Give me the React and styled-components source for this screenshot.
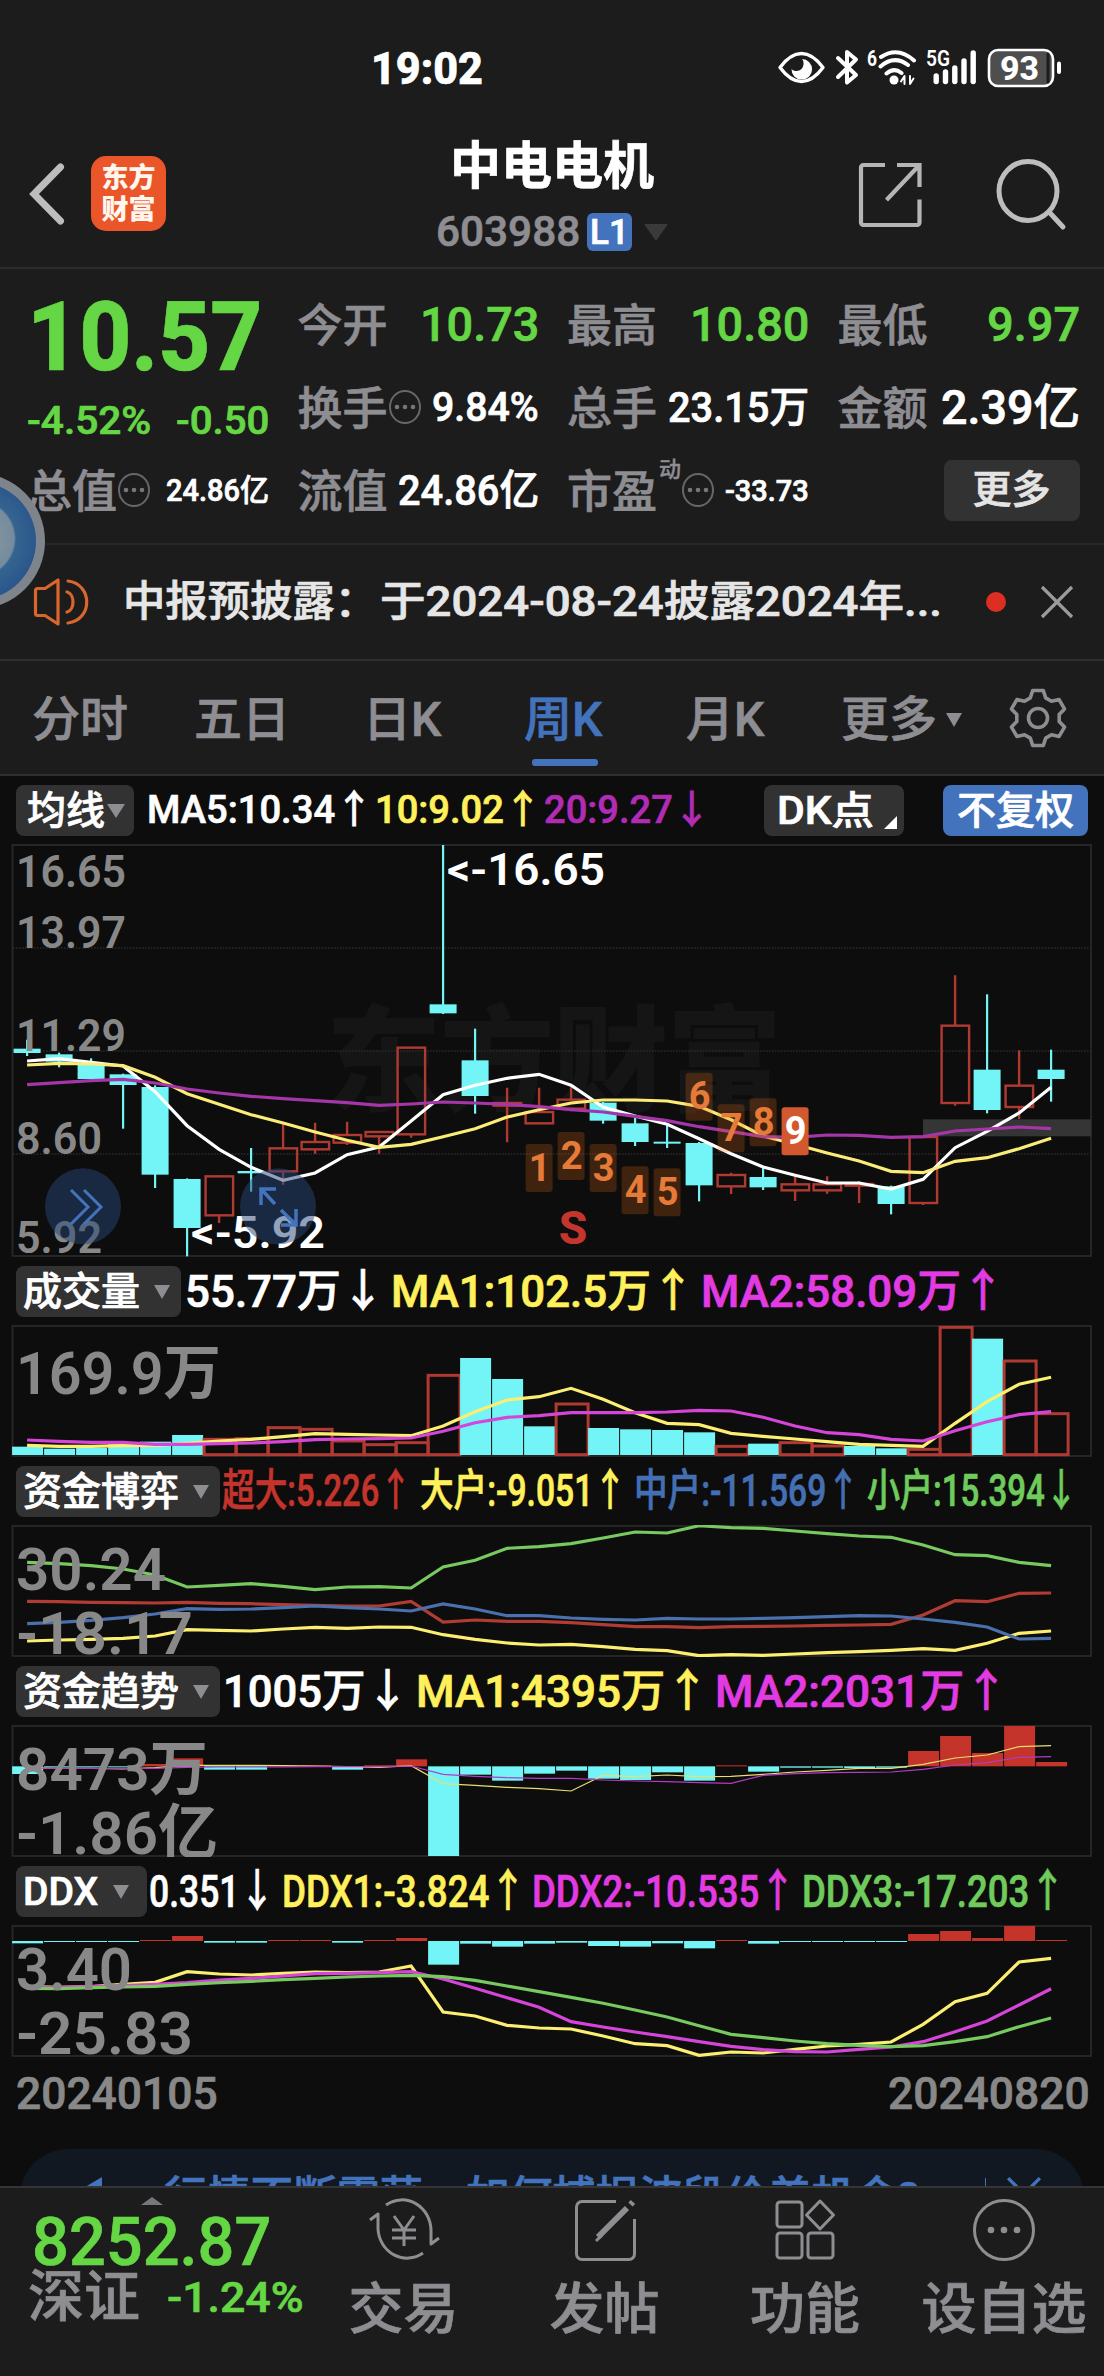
import React, { useLayoutEffect, useRef, useState } from 'react'
import styled, { createGlobalStyle } from 'styled-components';

const CYAN = '#73f5f7';
const RED = '#c4342b';
const OUTLINE = '#b03a32';
const YELLOW = '#fff05c';
const MAGENTA = '#e23be2';
const BLUE = '#4373bc';
const GREEN = '#65d644';
const LIME = '#6fcb5c';
const GREY = '#8e8d92';

const GlobalStyle = createGlobalStyle`
    body {
        margin: 0;
        background: #1c1c1c;
        font-family: Roboto, "Noto Sans CJK SC", sans-serif;
        font-weight: 500;
        line-height: 1;
        color: #ffffff;
        -webkit-text-stroke: 0.7px currentColor;
    }
    * { box-sizing: border-box; }
    svg { display: block; flex: none; -webkit-text-stroke: 0; }
    svg text { font-family: Roboto, "Noto Sans CJK SC", sans-serif; }
`;

const Page = styled.div`
    position: relative;
    width: 1104px;
    height: 2376px;
    overflow: hidden;
    background: #1c1c1c;
`;

/* ---------- text that is squeezed to the width of its cell ---------- */
const FitBox = styled.span`
    display: inline-block;
    flex: none;
    width: ${p => p.$w}px;
    margin-left: ${p => p.$ml || 0}px;
    white-space: nowrap;
    font-size: ${p => p.$size}px;
    font-weight: ${p => p.$weight || 500};
    color: ${p => p.$color || 'inherit'};
`;
const FitInner = styled.span`
    display: inline-block;
    transform-origin: left center;
`;

function Fit({ w, ml, size, weight, color, children }) {
    const ref = useRef(null);
    const [scale, setScale] = useState(1);
    useLayoutEffect(() => {
        setScale(w / ref.current.offsetWidth);
    }, [w, children]);
    return (
        <FitBox $w={w} $ml={ml} $size={size} $weight={weight} $color={color}>
            <FitInner ref={ref} style={{ transform: `scaleX(${scale})` }}>{children}</FitInner>
        </FitBox>
    );
}

/* ---------- status bar ---------- */
const StatusBar = styled.div`
    display: flex;
    align-items: center;
    justify-content: space-between;
    height: 120px;
    padding: 16px 41px 0 371px;
`;

const StatusIcons = () => (
    <svg width="286" height="40" viewBox="0 0 286 40" fill="none" stroke="#fff" strokeLinecap="round" strokeLinejoin="round">
        <path d="M3 19.5C10 10 16 5.5 24.5 5.5S39 10 46 19.5C39 29 33 33.500 24.500 33.500S10 29 3 19.500Z" strokeWidth="3.400" />
        <path d="M25 11a10.300 10.300 0 1 1-10.500 10c3 3.200 8.500 2.500 10.800-1 2-3 1.500-7-.3-9Z" fill="#fff" stroke="none" />
        <path d="M61 10L79 27L70 34.500V4L79 11.500L61 29" strokeWidth="4" />
        <text x="90" y="18" fontSize="22" fontWeight="700" fill="#fff" stroke="none" textLength="10" lengthAdjust="spacingAndGlyphs">6</text>
        <path d="M104 9Q121-2 137 12.500M103.500 18.500Q117 6.500 131 17M109.500 25.500Q117 19 124.500 25" strokeWidth="4" />
        <circle cx="117" cy="32" r="4.500" fill="#fff" stroke="none" />
        <path d="M127.500 36V28L124 33.500M133 28V36L136.500 30.500" strokeWidth="2" />
        <text x="149" y="18" fontSize="22" fontWeight="600" fill="#fff" stroke="none" textLength="24" lengthAdjust="spacingAndGlyphs">5G</text>
        <path d="M159.200 28V33.500M168.500 24V33.500M177.800 20V33.500M187 13V33.500M196.200 5V33.500" strokeWidth="5.400" />
        <rect x="212" y="2" width="64" height="36" rx="9" fill="#4e4e4e" strokeWidth="2.600" />
        <path d="M271 6V34" stroke="#1c1c1c" strokeWidth="3" />
        <text x="223" y="31.500" fontSize="33" fontWeight="800" fill="#fff" stroke="none" textLength="39" lengthAdjust="spacingAndGlyphs">93</text>
        <path d="M282 15.500V24" strokeWidth="4" />
    </svg>
);

/* ---------- header ---------- */
const Header = styled.div`
    display: grid;
    grid-template-columns: 300px 1fr 300px;
    align-items: center;
    height: 149px;
    border-bottom: 2px solid #2c2b2b;
`;
const HeaderLeft = styled.div`
    display: flex;
    align-items: center;
    gap: 25px;
    padding-left: 28px;
`;
const HeaderRight = styled.div`
    display: flex;
    align-items: center;
    gap: 72px;
    padding-left: 53px;
`;
const Logo = styled.div`
    display: grid;
    align-content: center;
    justify-content: center;
    gap: 5px;
    width: 75px;
    height: 75px;
    padding-top: 2px;
    border-radius: 15px;
    background: #ea5529;
    color: #fff6ee;
    font-size: 27px;
    font-weight: 800;
    -webkit-text-stroke: 0;
`;
const Title = styled.div`
    display: flex;
    flex-direction: column;
    align-items: center;
    gap: 19px;
    padding-top: 7px;
    font-size: 51px;
    font-weight: 700;
`;
const Code = styled.div`
    display: flex;
    align-items: center;
    font-size: 42px;
    font-weight: 500;
    color: ${GREY};
`;
const Level = styled.span`
    display: flex;
    align-items: center;
    justify-content: center;
    width: 45px;
    height: 38px;
    margin: 0 12px 0 7px;
    border-radius: 6px;
    background: ${BLUE};
    color: #fff;
    font-size: 35px;
`;
const Caret = styled.span`
    flex: none;
    width: 0;
    height: 0;
    margin-left: ${p => p.$ml || 0}px;
    border-left: ${p => p.$w / 2}px solid transparent;
    border-right: ${p => p.$w / 2}px solid transparent;
    border-top: ${p => p.$h}px solid ${p => p.$color || GREY};
`;

const BackIcon = () => (
    <svg width="38" height="64" viewBox="0 0 38 64" fill="none" stroke="#bdbdbd" strokeWidth="7" strokeLinecap="round">
        <path d="M32.500 5L6 32L32.500 59" strokeLinejoin="miter" />
    </svg>
);
const ShareIcon = () => (
    <svg width="66" height="66" viewBox="0 0 66 66" fill="none" stroke="#b5b5b5" strokeWidth="4.200">
        <path d="M28 4H6.500A2.500 2.500 0 0 0 4 6.500V61.500A2.500 2.500 0 0 0 6.500 64H60A2.500 2.500 0 0 0 62.500 61.500V38.500M40 4H62.500V26M62 4.500L29.500 39" />
    </svg>
);
const SearchIcon = () => (
    <svg width="72" height="76" viewBox="0 0 72 76" fill="none" stroke="#bdbdbd" strokeWidth="5" strokeLinecap="round">
        <ellipse cx="33" cy="35" rx="29" ry="29.500" />
        <path d="M55 57L68 71" />
    </svg>
);

/* ---------- quote panel ---------- */
const Quote = styled.div`
    display: grid;
    grid-template-columns: 242px 241px 242px 242px;
    grid-template-rows: 82px 83px 83px;
    column-gap: 28.500px;
    height: 276px;
    padding: 15px 0 0 27px;
    border-bottom: 2px solid #272727;
`;
const PriceBlock = styled.div`
    grid-row: 1 / 3;
    display: flex;
    flex-direction: column;
    gap: 16px;
    padding-top: 5px;
    color: ${GREEN};
`;
const Change = styled.div`
    display: flex;
    justify-content: space-between;
`;
const Cell = styled.div`
    display: flex;
    align-items: center;
    min-width: 0;
    white-space: nowrap;
`;
const Label = styled.span`
    width: 90px;
    padding-top: 3px;
    font-size: 45px;
    color: ${GREY};
`;
const Sup = styled.span`
    align-self: flex-start;
    padding-top: 10px;
    margin: 0 0 0 2px;
    font-size: 22px;
    color: ${GREY};
    -webkit-text-stroke-width: 0.4px;
`;
const Value = styled.span`
    margin-left: auto;
    color: ${p => p.$up ? '#fff' : GREEN};
`;
const MoreButton = styled.button`
    width: 136px;
    height: 61px;
    margin: 0 0 0 auto;
    padding: 0;
    border: 0;
    border-radius: 8px;
    background: #323232;
    color: #e4e4e4;
    font: 500 39px/1 Roboto, "Noto Sans CJK SC", sans-serif;
    -webkit-text-stroke: 0.7px currentColor;
`;
const InfoIcon = () => (
    <svg width="34" height="36" viewBox="0 0 34 36">
        <ellipse cx="17" cy="17" rx="15" ry="16" fill="none" stroke="#67666a" strokeWidth="2" />
        <g fill="#77767a"><circle cx="9" cy="17" r="2.300" /><circle cx="17" cy="17" r="2.300" /><circle cx="25" cy="17" r="2.300" /></g>
    </svg>
);

function Item({ label, sup, info, w, size, value, green }) {
    return (
        <Cell>
            <Label>{label}</Label>
            {sup && <Sup>{sup}</Sup>}
            {info && <InfoIcon />}
            <Value $up={!green}><Fit w={w} size={size}>{value}</Fit></Value>
        </Cell>
    );
}

/* ---------- notice and tabs ---------- */
const Notice = styled.div`
    display: flex;
    align-items: center;
    height: 116px;
    padding-left: 32px;
    border-bottom: 2px solid #303030;
    color: #e6e6e6;
`;
const Dot = styled.span`
    width: 20px;
    height: 20px;
    margin: 0 34px 0 44px;
    border-radius: 50%;
    background: #dc2f22;
`;
const Tabs = styled.div`
    display: flex;
    align-items: center;
    height: 115px;
    padding-left: 32px;
    border-bottom: 2px solid #2f2f2f;
`;
const Tab = styled.div`
    position: relative;
    display: flex;
    align-items: center;
    height: 113px;
    width: ${p => p.$w}px;
    margin-right: ${p => p.$mr}px;
    padding-top: 4px;
    font-size: 48px;
    white-space: nowrap;
    color: ${p => p.$on ? BLUE : GREY};
    &::after {
        content: '';
        display: ${p => p.$on ? 'block' : 'none'};
        position: absolute;
        left: 8px;
        bottom: 8px;
        width: 66px;
        height: 7px;
        border-radius: 3px;
        background: ${BLUE};
    }
`;

const SpeakerIcon = () => (
    <svg width="58" height="50" viewBox="0 0 58 50" fill="none" stroke="#d9662c" strokeWidth="3.200" strokeLinecap="round" strokeLinejoin="round">
        <path d="M3.500 13.500Q3.500 11.500 5.500 11.500H13L26 3V47L13 38.500H5.500Q3.500 38.500 3.500 36.500Z" />
        <path d="M35 15C43 17 43 33 35 35M36 4C61 7 61 43 36 46" />
    </svg>
);
const CloseIcon = ({ size = 34, color = '#9b9b9b' }) => (
    <svg width={size} height={size} viewBox="0 0 34 34" stroke={color} strokeWidth="3.200">
        <path d="M2 2L32 32M32 2L2 32" />
    </svg>
);
const gearPath = () => {
    const pts = [];
    for (let k = 0; k < 6; k++) {
        [[-21, 21.500], [-11, 28], [11, 28], [21, 21.500]].forEach(([a, r]) => {
            const t = (k * 60 - 90 + a) * Math.PI / 180;
            pts.push(`${(30 + r * Math.cos(t)).toFixed(1)} ${(30 + r * Math.sin(t)).toFixed(1)}`);
        });
    }
    return `M${pts.join('L')}Z`;
};
const GearIcon = () => (
    <svg width="60" height="60" viewBox="0 0 60 60" fill="none" stroke={GREY} strokeWidth="3.600" strokeLinejoin="round">
        <path d={gearPath()} />
        <circle cx="30" cy="30" r="9.500" />
    </svg>
);

/* ---------- charts ---------- */
const ChartArea = styled.div`
    height: 1410px;
    overflow: hidden;
    background: #0d0d0d;
`;
const Legend = styled.div`
    display: flex;
    align-items: center;
    height: 68px;
    padding-left: 16px;
`;
const Chip = styled.span`
    display: flex;
    flex: none;
    align-items: center;
    width: ${p => p.$w}px;
    height: 51px;
    margin-left: ${p => p.$ml || 0}px;
    padding: 2px 0 0 ${p => p.$pl || 7}px;
    border-radius: 8px;
    background: ${p => p.$bg || '#323232'};
    color: #fff;
    font-size: 39px;
    white-space: nowrap;
`;
const Corner = styled.span`
    align-self: flex-end;
    margin: 0 0 7px 10px;
    border-left: 13px solid transparent;
    border-bottom: 13px solid #fff;
`;

const X0 = 27.100;
const STEP = 32;
const cx = i => X0 + STEP * i;

// every data row is kept in thirds of a pixel, measured from `top`
const scaleY = top => v => (v - top) / 3 + 1;

const Line = ({ data, y, color, width = 3.200 }) => (
    <polyline fill="none" stroke={color} strokeWidth={width} points={data.map((v, i) => `${cx(i).toFixed(1)},${y(v).toFixed(1)}`).join(' ')} />
);
const Frame = ({ h }) => <rect x="12.500" y="1" width="1078.500" height={h - 2} fill="none" stroke="#292929" strokeWidth="1.800" />;
const AxisText = ({ x = 16, y, w, size = 60, children }) => (
    <text x={x} y={y} fontSize={size} fontWeight="600" fill="#888" textLength={w} lengthAdjust="spacingAndGlyphs">{children}</text>
);

// high, body top, body bottom, low, rising
const candles = [
    [628, 655, 668, 677, 0], [667, 672, 694, 711, 0], [684, 700, 746, 748, 0], [730, 732, 764, 895, 0],
    [765, 770, 1033, 1073, 0], [1044, 1046, 1193, 1278, 0], [1036, 1038, 1155, 1178, 1], [953, 1022, 1029, 1084, 0],
    [880, 954, 1023, 1063, 1], [877, 935, 957, 970, 1], [874, 914, 937, 944, 1], [903, 905, 918, 970, 1],
    [652, 652, 912, 922, 1], [44, 522, 549, 551, 0], [595, 690, 797, 850, 0], [772, 818, 826, 936, 1],
    [772, 845, 879, 881, 1], [765, 808, 835, 843, 1], [815, 817, 871, 880, 0], [862, 879, 935, 947, 0],
    [885, 934, 940, 953, 0], [935, 938, 1065, 1113, 0], [1027, 1034, 1068, 1091, 1], [1012, 1040, 1071, 1079, 0],
    [1036, 1062, 1080, 1112, 1], [1038, 1062, 1080, 1090, 1], [1052, 1061, 1066, 1118, 1], [1066, 1068, 1121, 1152, 0],
    [918, 920, 1118, 1124, 1], [435, 586, 818, 826, 1], [492, 718, 839, 849, 0], [660, 766, 830, 866, 1],
    [658, 718, 746, 814, 0],
];
const ma5 = [692, 685, 696, 707, 784, 886, 957, 1011, 1050, 1028, 973, 950, 872, 793, 765, 744, 732, 765, 830, 857, 882, 925, 970, 1010, 1035, 1058, 1058, 1076, 1047, 952, 903, 848, 771];
const ma10 = [704, 699, 701, 706, 741, 790, 822, 853, 878, 905, 930, 951, 942, 919, 895, 860, 838, 818, 809, 809, 812, 828, 868, 917, 942, 968, 992, 1023, 1027, 993, 982, 955, 924];
const ma20 = [763, 757, 751, 747, 758, 776, 788, 798, 805, 811, 817, 825, 821, 815, 818, 822, 829, 838, 845, 858, 871, 889, 904, 919, 921, 914, 915, 921, 919, 902, 896, 890, 895];
// candle index, top, digit
const marks = [[16, 941, 1], [17, 905, 2], [18, 941, 3], [19, 1008, 4], [20, 1014, 5], [21, 727, 6], [22, 822, 7], [23, 804, 8], [24, 831, 9]];

function Candle({ c, i, y }) {
    const [hi, top, bottom, lo, rising] = c;
    const x = cx(i);
    if (!rising) {
        return (
            <g fill={CYAN}>
                <rect x={x - 1.100} y={y(hi)} width="2.200" height={(lo - hi) / 3} />
                <rect x={x - 13.500} y={y(top)} width="27" height={Math.max(2, (bottom - top) / 3)} />
            </g>
        );
    }
    return (
        <g fill="none" stroke={OUTLINE} strokeWidth="2.400">
            <path d={`M${x} ${y(hi)}V${y(top)}M${x} ${y(bottom)}V${y(lo)}`} />
            <rect x={x - 13.500} y={y(top)} width="27.500" height={(bottom - top) / 3} />
        </g>
    );
}

function KChart() {
    const y = scaleY(44);
    return (
        <svg width="1104" height="413" viewBox="0 0 1104 413">
            <text x="326" y="258" fontSize="115" fontWeight="900" fill="#151515" textLength="456">东方财富</text>
            <Frame h={413} />
            {[353, 662, 971].map(v => <path key={v} d={`M13 ${y(v)}H1091`} stroke="#2b2b2b" strokeWidth="1.500" strokeDasharray="1.500 1.500" />)}
            <rect x="923" y={y(867)} width="168" height="17" fill="#353535" />
            {candles.map((c, i) => <Candle key={i} c={c} i={i} y={y} />)}
            <Line data={ma5} y={y} color="#ffffff" />
            <Line data={ma10} y={y} color="#fbec78" />
            <Line data={ma20} y={y} color="#a536a8" />
            <AxisText y={y(171)} w={110} size={45}>16.65</AxisText>
            <AxisText y={y(354)} w={110} size={45}>13.97</AxisText>
            <AxisText y={y(662)} w={110} size={45}>11.29</AxisText>
            <AxisText y={y(972)} w={86} size={45}>8.60</AxisText>
            <AxisText y={y(1269)} w={86} size={45}>5.92</AxisText>
            <g fill="#fff" fontSize="45" fontWeight="600">
                <text x="447" y={y(165)} textLength="158" lengthAdjust="spacingAndGlyphs">&lt;-16.65</text>
                <text x="191" y={y(1254)} textLength="134" lengthAdjust="spacingAndGlyphs">&lt;-5.92</text>
            </g>
            {marks.map(([i, top, n]) => (
                <g key={n}>
                    <rect x={cx(i) - 13.500} y={y(top)} width="27" height="48" rx="3" fill={n === 9 ? '#d2592f' : '#e66a14'} fillOpacity={n === 9 ? 1 : 0.230} />
                    <text x={cx(i) + 0.500} y={y(top) + 36.500} fontSize="38" fontWeight="700" textAnchor="middle" fill={n === 9 ? '#fff' : '#e67a38'}>{n}</text>
                </g>
            ))}
            <text x="573" y={y(1242)} fontSize="46" fontWeight="800" fill="#c4352d" textAnchor="middle">S</text>
            <g fill="#284678" fillOpacity="0.500">
                <circle cx="83" cy={y(1128)} r="38" />
                <circle cx="278" cy={y(1128)} r="38" />
            </g>
            <g fill="none" stroke={BLUE} strokeWidth="3">
                <path d="M71 346L88 363L71 380M84 346L101 363L84 380" />
                <path d="M261 361V345H276M261 345L275 360M296 365V381H281M296 381L281 366" strokeWidth="3.500" />
            </g>
        </svg>
    );
}

const volume = [-560, -566, -563, -553, -545, -525, 535, 533, 500, 505, 540, 551, 545, 343, -294, -357, -499, 429, -504, -508, -510, -517, 556, -551, 545, 555, -558, -565, 565, 199, -236, 300, 458];
const volMa1 = [556, 559, 559, 557, 556, 550, 543, 538, 530, 521, 523, 525, 527, 498, 455, 420, 410, 385, 418, 458, 490, 494, 520, 529, 537, 545, 553, 556, 559, 490, 425, 373, 352];
const volMa2 = [540, 544, 547, 547, 553, 553, 551, 549, 545, 539, 537, 536, 534, 514, 488, 472, 467, 458, 458, 458, 456, 451, 453, 472, 498, 518, 524, 538, 543, 512, 485, 464, 455];

function VolumeChart() {
    const y = scaleY(198);
    return (
        <svg width="1104" height="132" viewBox="0 0 1104 132">
            <Frame h={132} />
            {volume.map((v, i) => v < 0
                ? <rect key={i} x={cx(i) - 15} y={y(-v)} width="31" height={(585 + v) / 3} fill={CYAN} />
                : <rect key={i} x={cx(i) - 15} y={y(v + 3)} width="32" height={(581 - v) / 3} fill="none" stroke={OUTLINE} strokeWidth="3" />)}
            <Line data={volMa1} y={y} color="#fbee70" />
            <Line data={volMa2} y={y} color="#d545d8" />
            <AxisText y={y(403)} w={205}>169.9万</AxisText>
        </svg>
    );
}

const small = [907, 911, 917, 927, 945, 981, 976, 971, 979, 989, 981, 980, 984, 921, 901, 865, 860, 851, 834, 816, 819, 797, 803, 805, 813, 821, 828, 832, 855, 884, 887, 907, 917];
const huge = [1024, 1025, 1027, 1028, 1029, 1027, 1030, 1031, 1034, 1036, 1038, 1038, 1024, 1086, 1080, 1084, 1084, 1088, 1094, 1100, 1100, 1103, 1100, 1099, 1098, 1096, 1095, 1093, 1065, 1022, 1025, 1000, 999];
const middle = [1091, 1087, 1081, 1073, 1062, 1046, 1048, 1047, 1043, 1038, 1043, 1047, 1053, 1032, 1047, 1067, 1067, 1074, 1078, 1080, 1075, 1077, 1077, 1075, 1073, 1070, 1067, 1068, 1077, 1087, 1101, 1137, 1135];
const large = [1143, 1140, 1138, 1135, 1128, 1109, 1111, 1113, 1107, 1102, 1105, 1101, 1102, 1124, 1138, 1149, 1155, 1153, 1160, 1168, 1172, 1187, 1184, 1186, 1182, 1178, 1175, 1171, 1166, 1171, 1150, 1120, 1113];

function FundChart() {
    const y = scaleY(798);
    return (
        <svg width="1104" height="132" viewBox="0 0 1104 132">
            <Frame h={132} />
            <Line data={huge} y={y} color="#b03c34" />
            <Line data={large} y={y} color="#fbee70" />
            <Line data={middle} y={y} color="#4a70ad" />
            <Line data={small} y={y} color="#77c960" />
            <AxisText y={y(990)} w={150}>30.24</AxisText>
            <AxisText y={y(1182)} w={177}>-18.17</AxisText>
        </svg>
    );
}

const Bars = ({ data, zero, y }) => data.map((v, i) => (
    <rect key={i} x={cx(i) - 15} y={y(Math.min(v, zero))} width="31" height={Math.max(1, Math.abs(v - zero) / 3)} fill={v > zero ? CYAN : RED} />
));

const trend = [372, 352, 352, 352, 342, 325, 359, 359, 347, 346, 359, 346, 328, 618, 374, 392, 371, 362, 386, 390, 367, 392, 346, 365, 353, 353, 354, 353, 303, 258, 309, 228, 336];
const trendMa1 = [353, 355, 355, 357, 353, 346, 346, 346, 347, 348, 350, 352, 347, 401, 406, 412, 416, 423, 376, 380, 375, 380, 379, 373, 366, 361, 355, 355, 343, 324, 315, 290, 287];
const trendMa2 = [354, 355, 355, 355, 355, 352, 351, 351, 351, 350, 350, 350, 348, 373, 379, 383, 385, 385, 390, 393, 395, 398, 400, 376, 371, 368, 367, 366, 358, 345, 338, 322, 320];

function TrendChart() {
    const y = scaleY(228);
    return (
        <svg width="1104" height="132" viewBox="0 0 1104 132">
            <Frame h={132} />
            <Bars data={trend} zero={349} y={y} />
            <Line data={trendMa1} y={y} color="#e9df70" width={1.200} />
            <Line data={trendMa2} y={y} color="#b23cc4" width={1.200} />
            <AxisText y={y(420)} w={192}>8473万</AxisText>
            <AxisText y={y(612)} w={202}>-1.86亿</AxisText>
        </svg>
    );
}

const ddx = [880, 876, 876, 876, 870, 858, 878, 878, 870, 870, 878, 870, 864, 944, 881, 890, 881, 878, 888, 890, 880, 895, 870, 881, 876, 876, 876, 876, 852, 843, 864, 828, 870];
const ddx1 = [1010, 1012, 1010, 1003, 997, 965, 972, 975, 970, 966, 968, 966, 948, 1086, 1098, 1126, 1134, 1137, 1158, 1181, 1187, 1216, 1206, 1209, 1198, 1188, 1183, 1176, 1123, 1055, 1030, 936, 925];
const ddx2 = [1012, 1012, 1010, 1007, 1003, 998, 990, 985, 978, 971, 970, 968, 965, 987, 1015, 1043, 1072, 1115, 1131, 1146, 1160, 1175, 1189, 1199, 1205, 1206, 1198, 1191, 1175, 1145, 1113, 1065, 1016];
const ddx3 = [1015, 1016, 1013, 1011, 1009, 1003, 998, 994, 989, 985, 981, 978, 976, 980, 991, 1008, 1025, 1042, 1060, 1080, 1101, 1127, 1153, 1163, 1173, 1181, 1186, 1190, 1187, 1175, 1160, 1130, 1104];

function DdxChart() {
    const y = scaleY(828);
    return (
        <svg width="1104" height="132" viewBox="0 0 1104 132">
            <Frame h={132} />
            <Bars data={ddx} zero={873} y={y} />
            <Line data={ddx1} y={y} color="#fbee70" />
            <Line data={ddx2} y={y} color="#d545d8" />
            <Line data={ddx3} y={y} color="#77c960" />
            <AxisText y={y(1020)} w={116}>3.40</AxisText>
            <AxisText y={y(1212)} w={177}>-25.83</AxisText>
        </svg>
    );
}

const Dates = styled.div`
    display: flex;
    justify-content: space-between;
    padding: 14px 14px 0 16px;
    height: 92px;
    color: #888;
`;
const Promo = styled.div`
    display: flex;
    align-items: flex-start;
    width: 1064px;
    height: 96px;
    margin: 0 auto;
    padding: 27px 0 0 58px;
    border-radius: 48px;
    background: #111821;
    color: ${BLUE};
`;
const PromoLine = styled.span`
    width: 1px;
    height: 40px;
    margin: 2px 20px 0 auto;
    background: ${BLUE};
`;
const PromoClose = styled.span`
    margin-right: 42px;
`;

/* ---------- bottom bar ---------- */
const BottomBar = styled.div`
    display: grid;
    grid-template-columns: 303px 201px 201px 200px 198px;
    height: 190px;
    border-top: 2px solid #353535;
    background: #1c1c1c;
`;
const IndexBox = styled.div`
    display: flex;
    flex-direction: column;
    padding: 9px 0 0 28px;
    color: ${GREEN};
`;
const UpCaret = styled.span`
    width: 0;
    margin: 0 0 5px 113px;
    border-left: 11.500px solid transparent;
    border-right: 11.500px solid transparent;
    border-bottom: 8px solid #77767a;
`;
const IndexRow = styled.div`
    display: flex;
    align-items: center;
    margin-top: -7px;
`;
const IndexName = styled.span`
    flex: none;
    white-space: nowrap;
    font-size: 56px;
    color: ${GREY};
`;
const NavItem = styled.div`
    display: flex;
    flex-direction: column;
    align-items: center;
    gap: 19px;
    padding-top: 9px;
    font-size: 55px;
    white-space: nowrap;
    color: ${GREY};
`;

const NavIcon = ({ children }) => (
    <svg width="72" height="66" viewBox="0 0 72 66" fill="none" stroke={GREY} strokeWidth="3" strokeLinejoin="round">{children}</svg>
);

/* ---------- assistant bubble at the left edge ---------- */
const Bubble = styled.div`
    position: absolute;
    left: -91px;
    top: 473px;
    width: 136px;
    height: 136px;
    border: 9px solid rgba(140, 140, 140, 0.860);
    border-radius: 50%;
    background: radial-gradient(circle at 50% 48%, #8d9aa2 0, #758c9c 37px, #34648f 39px, #2b568c 60px);
`;

function App() {
    return (
        <Page>
            <GlobalStyle />
            <StatusBar>
                <Fit w={112} size={45} weight={800}>19:02</Fit>
                <StatusIcons />
            </StatusBar>
            <Header>
                <HeaderLeft>
                    <BackIcon />
                    <Logo><span>东方</span><span>财富</span></Logo>
                </HeaderLeft>
                <Title>
                    <span>中电电机</span>
                    <Code>
                        <Fit w={144} size={42}>603988</Fit>
                        <Level>L1</Level>
                        <Caret $w={24} $h={17} $color="#3a3a3a" />
                    </Code>
                </Title>
                <HeaderRight>
                    <ShareIcon />
                    <SearchIcon />
                </HeaderRight>
            </Header>

            <Quote>
                <PriceBlock>
                    <Fit w={236} size={97} weight={800}>10.57</Fit>
                    <Change>
                        <Fit w={124} size={38}>-4.52%</Fit>
                        <Fit w={93} size={38}>-0.50</Fit>
                    </Change>
                </PriceBlock>
                <Item label="今开" value="10.73" w={119} size={48} green />
                <Item label="最高" value="10.80" w={119} size={48} green />
                <Item label="最低" value="9.97" w={93} size={48} green />
                <Item label="换手" info value="9.84%" w={107} size={40} />
                <Item label="总手" value="23.15万" w={141} size={42} />
                <Item label="金额" value="2.39亿" w={139} size={48} />
                <Item label="总值" info value="24.86亿" w={103} size={31} />
                <Item label="流值" value="24.86亿" w={141} size={42} />
                <Item label="市盈" sup="动" info value="-33.73" w={84} size={30} />
                <Cell><MoreButton>更多</MoreButton></Cell>
            </Quote>

            <Notice>
                <SpeakerIcon />
                <Fit w={254} ml={33} size={42}>中报预披露：</Fit>
                <Fit w={562} ml={3} size={42}>于2024-08-24披露2024年...</Fit>
                <Dot />
                <CloseIcon />
            </Notice>

            <Tabs>
                <Tab $w={98} $mr={64}>分时</Tab>
                <Tab $w={98} $mr={71}>五日</Tab>
                <Tab $w={84} $mr={77}>日K</Tab>
                <Tab $w={84} $mr={78} $on>周K</Tab>
                <Tab $w={84} $mr={71}>月K</Tab>
                <Tab $w={124} $mr={43}>更多<Caret $w={17} $h={14} $ml={9} /></Tab>
                <GearIcon />
            </Tabs>

            <ChartArea>
                <Legend>
                    <Chip $w={118} $pl={11}>均线<Caret $w={18} $h={14} $ml={2} /></Chip>
                    <Fit w={226} ml={13} size={39}>MA5:10.34↑</Fit>
                    <Fit w={167} ml={2} size={39} color={YELLOW}>10:9.02↑</Fit>
                    <Fit w={167} ml={2} size={39} color="#b12bb5">20:9.27↓</Fit>
                    <Chip $w={140} $ml={53} $pl={13}><Fit w={97} size={39}>DK点</Fit><Corner /></Chip>
                    <Chip $w={145} $ml={39} $pl={14} $bg={BLUE}>不复权</Chip>
                </Legend>
                <KChart />
                <Legend>
                    <Chip $w={165}>成交量<Caret $w={17} $h={14} $ml={14} /></Chip>
                    <Fit w={200} ml={4} size={45}>55.77万↓</Fit>
                    <Fit w={304} ml={6} size={45} color={YELLOW}>MA1:102.5万↑</Fit>
                    <Fit w={304} ml={6} size={45} color={MAGENTA}>MA2:58.09万↑</Fit>
                </Legend>
                <VolumeChart />
                <Legend>
                    <Chip $w={204}>资金博弈<Caret $w={17} $h={14} $ml={14} /></Chip>
                    <Fit w={190} ml={2} size={44} color="#c4342c">超大:5.226↑</Fit>
                    <Fit w={207} ml={8} size={44} color={YELLOW}>大户:-9.051↑</Fit>
                    <Fit w={226} ml={7} size={44} color="#456fb3">中户:-11.569↑</Fit>
                    <Fit w={211} ml={7} size={44} color={LIME}>小户:15.394↓</Fit>
                </Legend>
                <FundChart />
                <Legend>
                    <Chip $w={204}>资金趋势<Caret $w={17} $h={14} $ml={14} /></Chip>
                    <Fit w={186} ml={3} size={45}>1005万↓</Fit>
                    <Fit w={293} ml={7} size={45} color={YELLOW}>MA1:4395万↑</Fit>
                    <Fit w={293} ml={6} size={45} color={MAGENTA}>MA2:2031万↑</Fit>
                </Legend>
                <TrendChart />
                <Legend>
                    <Chip $w={131}>DDX<Caret $w={17} $h={14} $ml={15} /></Chip>
                    <Fit w={126} ml={2} size={45}>0.351↓</Fit>
                    <Fit w={244} ml={7} size={45} color={YELLOW}>DDX1:-3.824↑</Fit>
                    <Fit w={264} ml={6} size={45} color={MAGENTA}>DDX2:-10.535↑</Fit>
                    <Fit w={264} ml={6} size={45} color={LIME}>DDX3:-17.203↑</Fit>
                </Legend>
                <DdxChart />
                <Dates>
                    <Fit w={202} size={45}>20240105</Fit>
                    <Fit w={202} size={45}>20240820</Fit>
                </Dates>
                <Promo>
                    <svg width="30" height="40" viewBox="0 0 30 40" fill={BLUE}><path d="M24 1V30H8L2 14Z" /></svg>
                    <Fit w={755} ml={56} size={43}>行情不断震荡，如何捕捉波段价差机会?</Fit>
                    <PromoLine />
                    <PromoClose><CloseIcon size={36} color={BLUE} /></PromoClose>
                </Promo>
            </ChartArea>

            <BottomBar>
                <IndexBox>
                    <UpCaret />
                    <Fit w={239} ml={4} size={66}>8252.87</Fit>
                    <IndexRow>
                        <IndexName>深证</IndexName>
                        <Fit w={137} ml={27} size={43}>-1.24%</Fit>
                    </IndexRow>
                </IndexBox>
                <NavItem>
                    <NavIcon>
                        <path d="M2 23L10 17V32A29 31 0 0 0 55 56M18 8A29 31 0 0 1 63 34V47L71 41" />
                        <path d="M26 19L36 33L46 19M36 33V49M24 33H48M24 41H48" />
                    </NavIcon>
                    交易
                </NavItem>
                <NavItem>
                    <NavIcon>
                        <path d="M47 4.500H13A5.500 5.500 0 0 0 7.500 10V57A5.500 5.500 0 0 0 13 62.500H60A5.500 5.500 0 0 0 65.500 57V22" />
                        <path d="M29 40L58 11M61.500 7.500L64 5" strokeWidth="6" />
                        <path d="M27 44L33 38" />
                    </NavIcon>
                    发帖
                </NavItem>
                <NavItem>
                    <NavIcon>
                        <rect x="8" y="5" width="25" height="25" rx="3" />
                        <rect x="8" y="36" width="25" height="25" rx="3" />
                        <rect x="39" y="36" width="25" height="25" rx="3" />
                        <path d="M51 4L64.500 18L51 32L37.500 18Z" />
                    </NavIcon>
                    功能
                </NavItem>
                <NavItem>
                    <NavIcon>
                        <circle cx="36" cy="33" r="29.500" />
                        <g fill={GREY} stroke="none"><circle cx="23" cy="33" r="3.300" /><circle cx="36" cy="33" r="3.300" /><circle cx="49" cy="33" r="3.300" /></g>
                    </NavIcon>
                    设自选
                </NavItem>
            </BottomBar>
            <Bubble />
        </Page>
    );
}

export default App;
